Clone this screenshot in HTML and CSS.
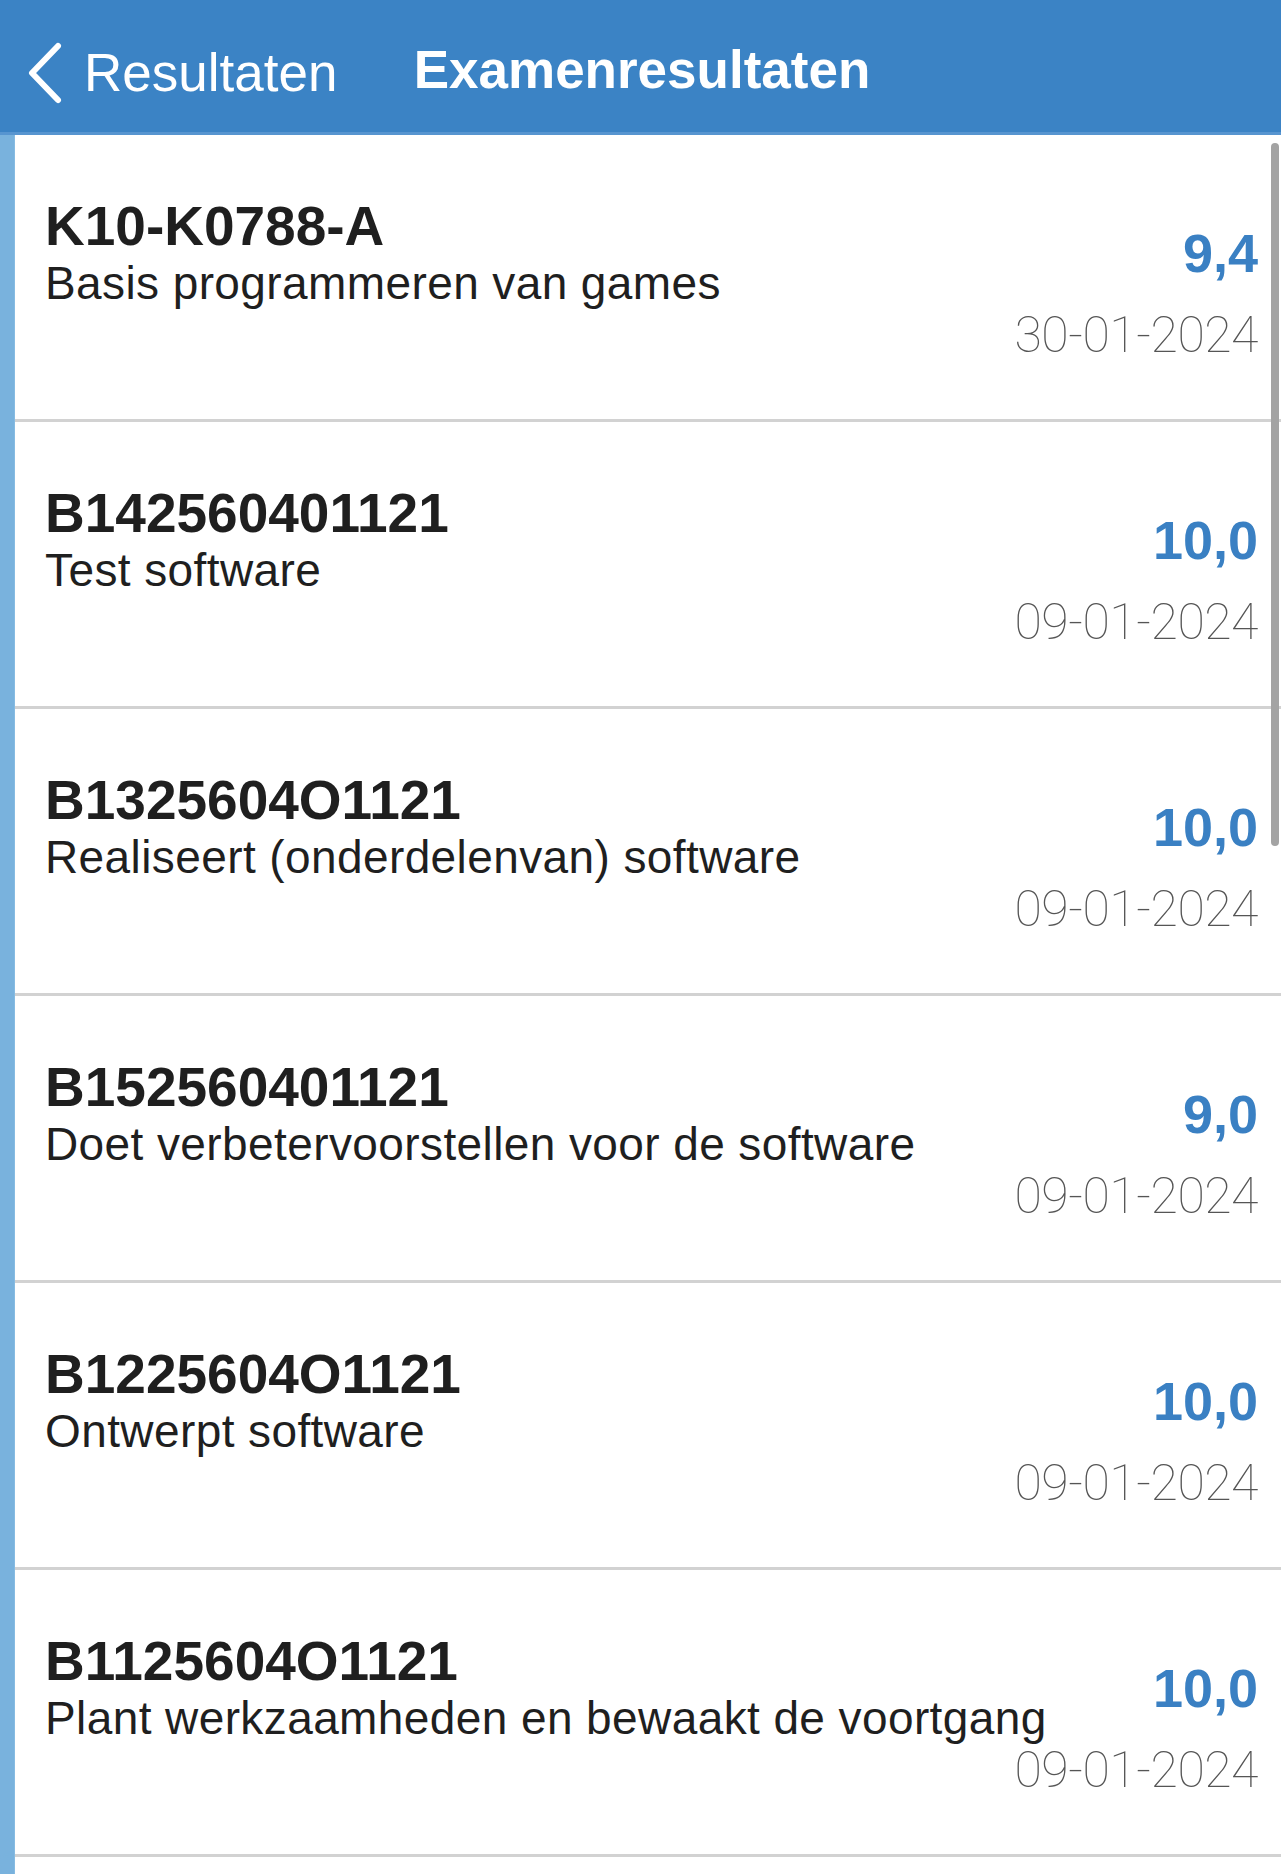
FILE: index.html
```html
<!DOCTYPE html>
<html lang="nl">
<head>
<meta charset="utf-8">
<title>Examenresultaten</title>
<link rel="stylesheet" href="styles.css">
</head>
<body>
<div class="app">
  <header class="navbar">
    <div class="back">
      <svg class="chev" width="40" height="64" viewBox="0 0 40 64" aria-hidden="true">
        <path d="M31 5 L5 32 L31 59" fill="none" stroke="#fff" stroke-width="6" stroke-linecap="round" stroke-linejoin="round"/>
      </svg>
      <span class="back-label">Resultaten</span>
    </div>
    <h1 class="title">Examenresultaten</h1>
    <div class="spacer"></div>
  </header>
  <main class="content">
    <div class="rail"></div>
    <ul class="list">
      <li class="row">
        <div class="info"><div class="code">K10-K0788-A</div><div class="name">Basis programmeren van games</div></div>
        <div class="result"><div class="grade">9,4</div><div class="date">30-01-2024</div></div>
      </li>
      <li class="row">
        <div class="info"><div class="code">B142560401121</div><div class="name">Test software</div></div>
        <div class="result"><div class="grade">10,0</div><div class="date">09-01-2024</div></div>
      </li>
      <li class="row">
        <div class="info"><div class="code">B1325604O1121</div><div class="name">Realiseert (onderdelenvan) software</div></div>
        <div class="result"><div class="grade">10,0</div><div class="date">09-01-2024</div></div>
      </li>
      <li class="row">
        <div class="info"><div class="code">B152560401121</div><div class="name">Doet verbetervoorstellen voor de software</div></div>
        <div class="result"><div class="grade">9,0</div><div class="date">09-01-2024</div></div>
      </li>
      <li class="row">
        <div class="info"><div class="code">B1225604O1121</div><div class="name">Ontwerpt software</div></div>
        <div class="result"><div class="grade">10,0</div><div class="date">09-01-2024</div></div>
      </li>
      <li class="row">
        <div class="info"><div class="code">B1125604O1121</div><div class="name">Plant werkzaamheden en bewaakt de voortgang</div></div>
        <div class="result"><div class="grade">10,0</div><div class="date">09-01-2024</div></div>
      </li>
    </ul>
    <div class="scrollbar"></div>
  </main>
</div>
</body>
</html>
```
FILE: styles.css
```css
* { box-sizing: border-box; }
html, body { margin: 0; padding: 0; background: #fff; }
body { width: 1281px; height: 1874px; overflow: hidden; font-family: "Liberation Sans", Arial, sans-serif; }

.app { display: flex; flex-direction: column; height: 1874px; }

.navbar {
  height: 135px;
  background: #3b83c5;
  border-bottom: 3px solid #5795d0;
  display: grid;
  grid-template-columns: 1fr auto 1fr;
  align-items: start;
  padding-top: 40px;
  color: #fff;
}
.back { display: flex; align-items: center; padding-left: 27px; }
.chev { display: block; margin-top: 1px; }
.back-label { font-size: 53px; line-height: 60px; margin-left: 17px; }
.title { margin: 0; font-size: 53px; line-height: 60px; font-weight: 700; padding-left: 3px; }

.content { position: relative; flex: 1; display: flex; min-height: 0; }
.rail { width: 15px; background: #79b2dd; border-right: 1px solid #86bbe2; flex: none; }
.list { list-style: none; margin: 0; padding: 0; flex: 1; min-width: 0; }

.row {
  height: 287px;
  border-bottom: 3px solid #d2d2d2;
  display: flex;
  justify-content: space-between;
  align-items: flex-start;
  padding: 61px 23px 0 30px;
}
.info { flex: 1; min-width: 0; white-space: nowrap; }
.code { font-size: 55px; line-height: 60px; font-weight: 700; color: #1f1f1f; }
.name { font-size: 46px; line-height: 54px; color: #1f1f1f; letter-spacing: 0.4px; }

.result { flex: none; display: flex; flex-direction: column; align-items: flex-end; padding-top: 27px; white-space: nowrap; }
.grade { font-size: 54px; line-height: 60px; font-weight: 700; color: #3a80c3; }
.date { font-family: Roboto, "Liberation Sans", sans-serif; font-weight: 100; font-size: 50px; line-height: 60px; color: #555; margin-top: 22px; letter-spacing: -0.5px; }

.scrollbar {
  position: absolute;
  right: 2px;
  top: 8px;
  width: 8px;
  height: 703px;
  border-radius: 4px;
  background: #a3a3a3;
}
```
